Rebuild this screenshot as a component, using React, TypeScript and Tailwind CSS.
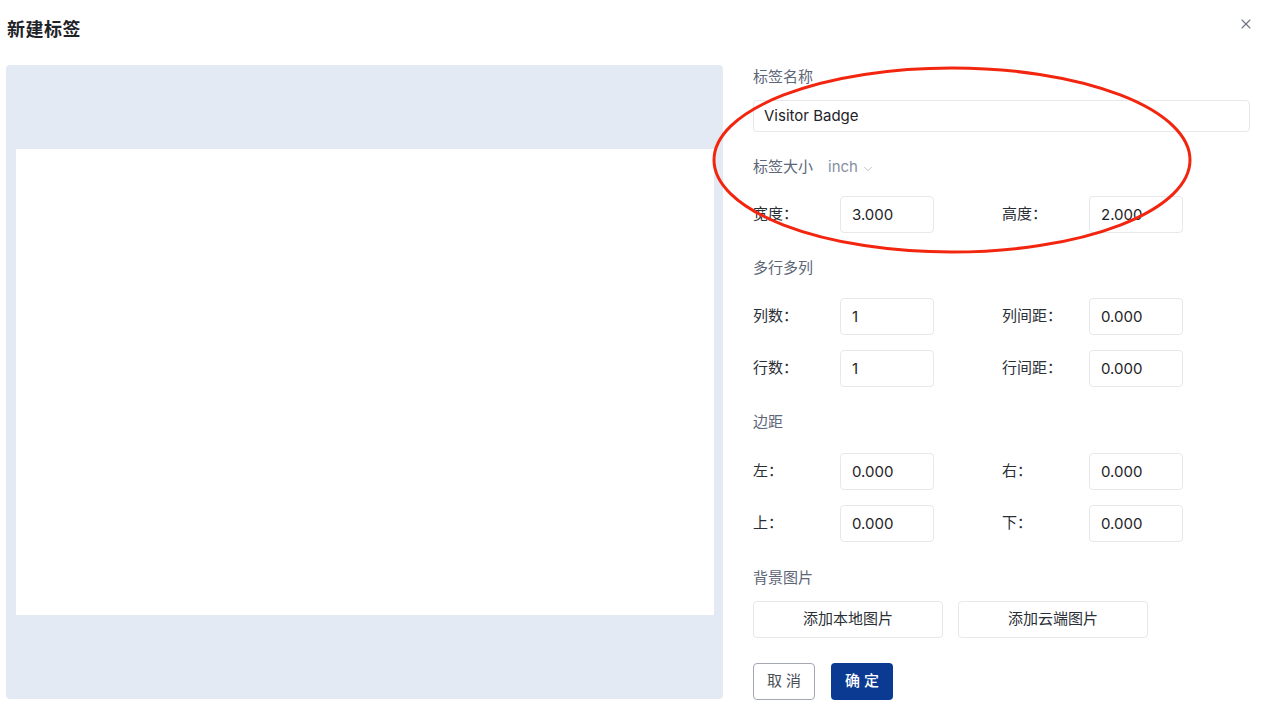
import React from 'react';
import { X, ChevronDown } from 'lucide-react';

const font = { fontFamily: 'Inter, "Noto Sans CJK SC", sans-serif' };

const Section: React.FC<{ children: React.ReactNode; className?: string }> = ({ children, className }) => (
  <div className={`h-[22px] leading-[22px] text-[15px] text-[#5d6677] pt-[1px] ${className ?? ''}`}>{children}</div>
);

const Field: React.FC<{ label: string; value: string }> = ({ label, value }) => (
  <div className="flex items-center">
    <span className="w-[87px] text-[15px] text-[#2b2f36]">{label}</span>
    <div className="w-[94px] h-[37px] border border-[#e6e8ec] rounded-[4px] flex items-center pl-[11px] pt-[2px] text-[15px] text-[#1f2328]">
      {value}
    </div>
  </div>
);

const FieldRow: React.FC<{ a: [string, string]; b: [string, string]; className?: string }> = ({ a, b, className }) => (
  <div className={`flex gap-[68px] ${className ?? ''}`}>
    <Field label={a[0]} value={a[1]} />
    <Field label={b[0]} value={b[1]} />
  </div>
);

export default function App() {
  return (
    <div className="relative w-full h-[714px] bg-white overflow-hidden" style={font}>
      <header className="h-[58px] flex items-center justify-between pl-[7px] pr-[13px]">
        <h1 className="text-[18px] font-bold text-[#1f2328] tracking-[0.5px]">新建标签</h1>
        <button className="text-[#6b7280] -mt-[11px]">
          <X size={16} strokeWidth={1.6} />
        </button>
      </header>

      <div className="flex pt-[7px]">
        <div className="ml-[6px] w-[717px] h-[634px] bg-[#e3eaf4] rounded-[4px] flex items-center justify-center">
          <div className="w-[698px] h-[466px] bg-white" />
        </div>

        <div className="ml-[30px] w-[497px] flex flex-col">
          <Section>标签名称</Section>
          <div className="mt-[13px] h-[32px] border border-[#e6e8ec] rounded-[4px] flex items-center pl-[10px] pt-[1px] text-[15px] text-[#1f2328]">
            Visitor Badge
          </div>

          <div className="mt-[24px] h-[22px] flex items-center pt-[1px]">
            <span className="text-[15px] text-[#5d6677]">标签大小</span>
            <span className="ml-[15px] text-[15px] text-[#8790a3]">inch</span>
            <ChevronDown size={14} strokeWidth={1.3} className="ml-[3px] mt-[2px] text-[#aab1be]" />
          </div>
          <FieldRow className="mt-[18px]" a={['宽度：', '3.000']} b={['高度：', '2.000']} />

          <Section className="mt-[23px]">多行多列</Section>
          <FieldRow className="mt-[20px]" a={['列数：', '1']} b={['列间距：', '0.000']} />
          <FieldRow className="mt-[15px]" a={['行数：', '1']} b={['行间距：', '0.000']} />

          <Section className="mt-[23px]">边距</Section>
          <FieldRow className="mt-[21px]" a={['左：', '0.000']} b={['右：', '0.000']} />
          <FieldRow className="mt-[15px]" a={['上：', '0.000']} b={['下：', '0.000']} />

          <Section className="mt-[24px]">背景图片</Section>
          <div className="mt-[13px] flex gap-[15px]">
            <button className="w-[190px] h-[37px] border border-[#e6e8ec] rounded-[4px] text-[15px] text-[#2b2f36]">添加本地图片</button>
            <button className="w-[190px] h-[37px] border border-[#e6e8ec] rounded-[4px] text-[15px] text-[#2b2f36]">添加云端图片</button>
          </div>

          <div className="mt-[25px] flex gap-[16px]">
            <button className="w-[62px] h-[37px] border border-[#a3a8b3] rounded-[4px] text-[15px] text-[#4a4f58] tracking-[4px] pl-[4px]">取消</button>
            <button className="w-[62px] h-[37px] bg-[#0b3a92] rounded-[4px] text-[15px] font-medium text-white tracking-[4px] pl-[4px]">确定</button>
          </div>
        </div>
      </div>

      <svg className="absolute left-0 top-0 pointer-events-none" width="1267" height="714">
        <ellipse cx="952" cy="160" rx="238" ry="92" fill="none" stroke="#f2260f" strokeWidth="3" />
      </svg>
    </div>
  );
}
